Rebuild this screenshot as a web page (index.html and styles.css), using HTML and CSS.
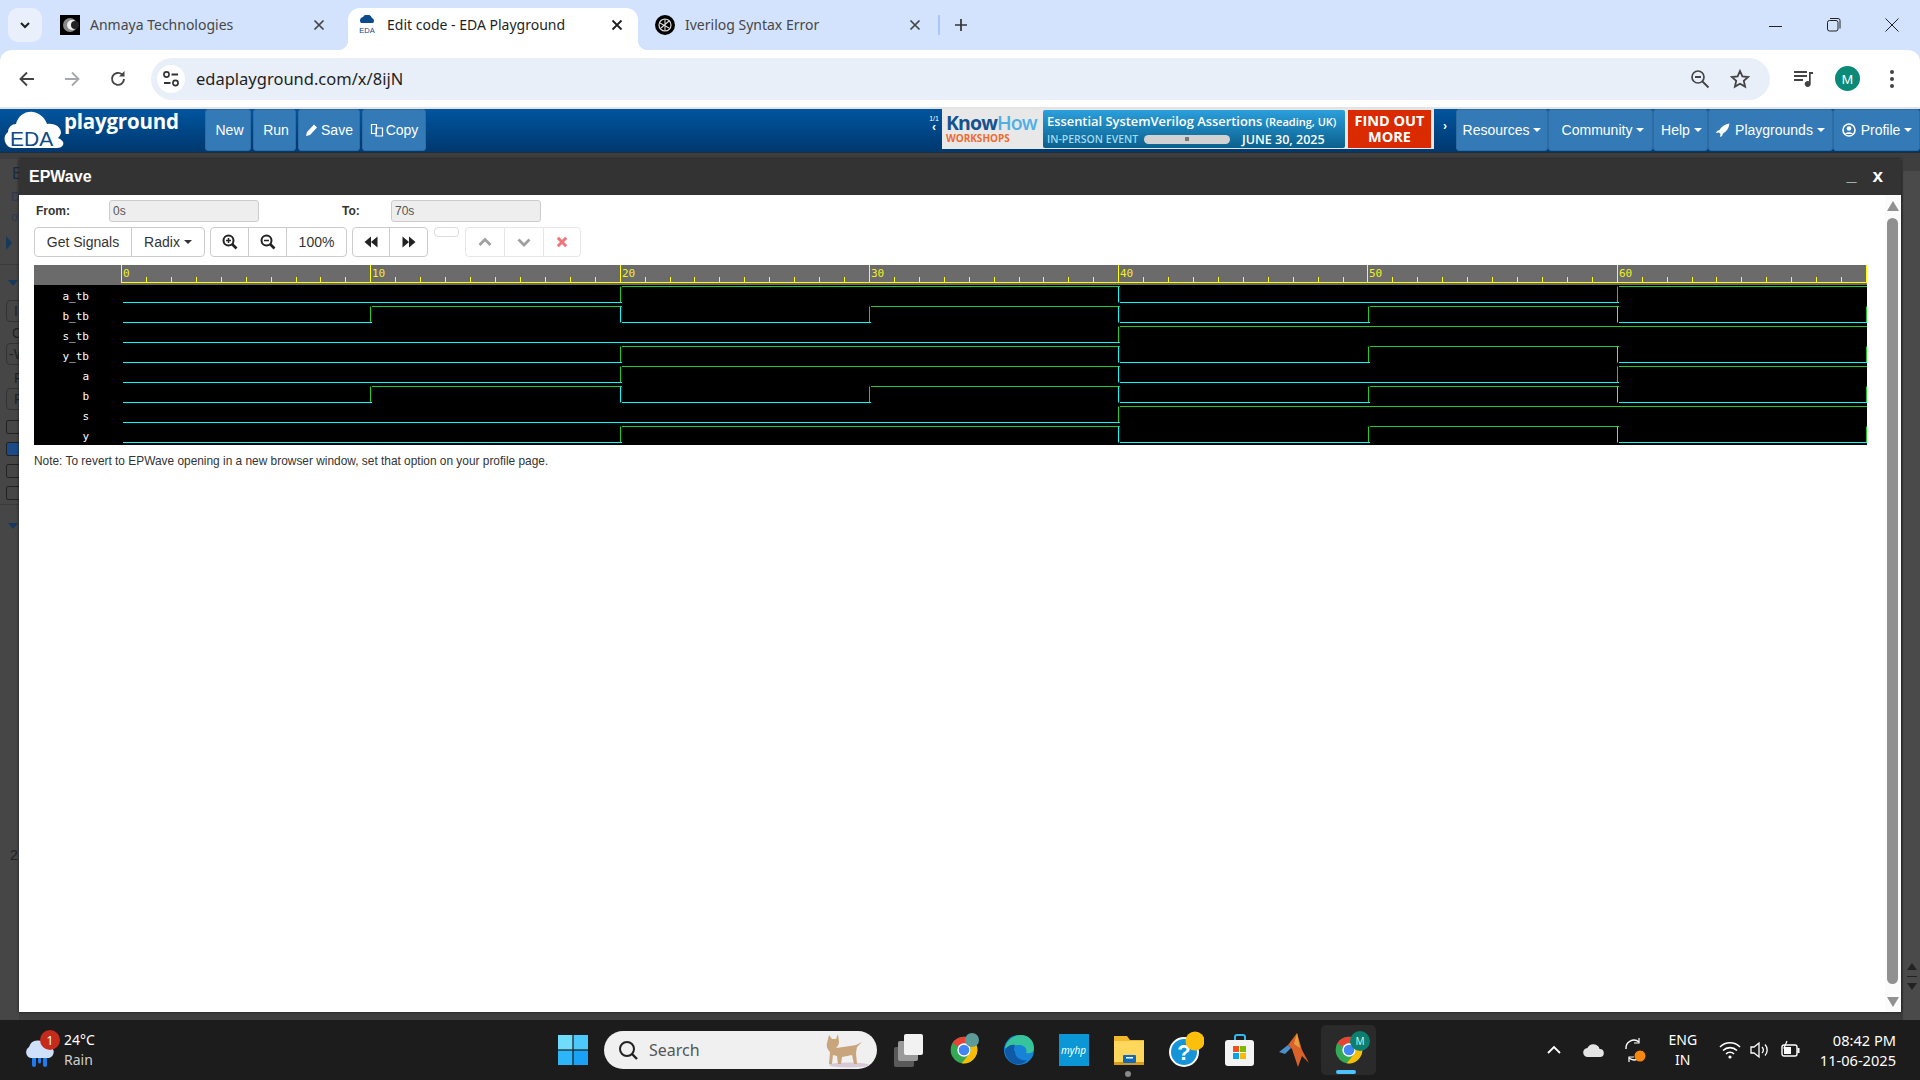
FILE: index.html
```html
<!DOCTYPE html>
<html lang="en">
<head>
<meta charset="utf-8">
<title>Edit code - EDA Playground</title>
<link rel="stylesheet" href="styles.css">
</head>
<body>
<svg class="defs" width="0" height="0">
  <defs>
    <symbol id="chrome" viewBox="0 0 24 24">
      <circle cx="12" cy="12" r="10" fill="#34a853"/>
      <path fill="#fbbc04" d="M20.66 7H12l4.33 2.5a5 5 0 0 1 0 5L10.3 21.85A10 10 0 0 0 20.66 7z"/>
      <path fill="#ea4335" d="M12 2a10 10 0 0 1 8.66 5H12a5 5 0 0 0-4.33 2.5L3.34 7A10 10 0 0 1 12 2z"/>
      <circle cx="12" cy="12" r="5" fill="#fff"/>
      <circle cx="12" cy="12" r="4" fill="#4285f4"/>
    </symbol>
    <g id="sigA">
      <path class="gr" d="M588 1.5H1086M1585 1.5H1833M586.5 1.5V17.5M1583.5 1.5V17.5"/>
      <path class="cy" d="M89 17.5H588M1086 17.5H1585M1084.5 1.5V17.5"/>
    </g>
    <g id="sigB">
      <path class="gr" d="M338 1.5H588M837 1.5H1086M1336 1.5H1585M336.5 1.5V17.5M835.5 1.5V17.5M1334.5 1.5V17.5M1832.5 1.5V17.5"/>
      <path class="cy" d="M89 17.5H338M588 17.5H837M1086 17.5H1336M1585 17.5H1833M586.5 1.5V17.5M1084.5 1.5V17.5M1583.5 1.5V17.5"/>
    </g>
    <g id="sigS">
      <path class="gr" d="M1086 1.5H1833M1084.5 1.5V17.5"/>
      <path class="cy" d="M89 17.5H1086"/>
    </g>
    <g id="sigY">
      <path class="gr" d="M588 1.5H1086M1336 1.5H1585M586.5 1.5V17.5M1334.5 1.5V17.5M1832.5 1.5V17.5"/>
      <path class="cy" d="M89 17.5H588M1086 17.5H1336M1585 17.5H1833M1084.5 1.5V17.5M1583.5 1.5V17.5"/>
    </g>
  </defs>
</svg>

<header class="chrome">
  <div class="tabstrip">
    <div class="tab-menu">
      <svg width="12" height="12" viewBox="0 0 12 12"><path d="M2 4l4 4 4-4" fill="none" stroke="#1f1f1f" stroke-width="2"/></svg>
    </div>
    <div class="tab">
      <svg class="fav" viewBox="0 0 20 20"><rect width="20" height="20" fill="#000"/><circle cx="10" cy="10" r="7" fill="#8a8a8a"/><circle cx="12" cy="10" r="5" fill="#eee"/><circle cx="15" cy="10" r="4" fill="#222"/></svg>
      <span class="tab-title">Anmaya Technologies</span>
      <svg class="tab-x" viewBox="0 0 12 12"><path d="M1.5 1.5l9 9M10.5 1.5l-9 9" stroke="#444" stroke-width="1.7"/></svg>
    </div>
    <div class="tab tab-active">
      <svg class="fav" viewBox="0 0 20 20"><path d="M3 10a4 4 0 0 1 3-4 5 5 0 0 1 9 1 3 3 0 0 1 1 5H4a3 3 0 0 1-1-2z" fill="#0b4a8b" transform="translate(0 -4)"/><text x="10" y="18" class="fav-eda">EDA</text></svg>
      <span class="tab-title">Edit code - EDA Playground</span>
      <svg class="tab-x" viewBox="0 0 12 12"><path d="M1.5 1.5l9 9M10.5 1.5l-9 9" stroke="#1f1f1f" stroke-width="1.8"/></svg>
    </div>
    <div class="tab tab-third">
      <svg class="fav" viewBox="0 0 20 20"><circle cx="10" cy="10" r="10" fill="#000"/><circle cx="10" cy="10" r="6" fill="none" stroke="#ddd" stroke-width="1.2"/><path d="M5 8l9 5M6 13l8-7M10 4v12" stroke="#ddd" stroke-width="1.1"/></svg>
      <span class="tab-title">Iverilog Syntax Error</span>
      <svg class="tab-x" viewBox="0 0 12 12"><path d="M1.5 1.5l9 9M10.5 1.5l-9 9" stroke="#444" stroke-width="1.7"/></svg>
    </div>
    <span class="tab-div"></span>
    <svg class="tab-plus" viewBox="0 0 14 14"><path d="M7 1v12M1 7h12" stroke="#333" stroke-width="1.7"/></svg>
    <div class="win-ctrl">
      <svg width="14" height="14" viewBox="0 0 14 14"><path d="M0 8.5h13" stroke="#222" stroke-width="1"/></svg>
      <svg width="14" height="14" viewBox="0 0 14 14"><rect x=".5" y="2.5" width="10.5" height="10.5" rx="2" fill="none" stroke="#222"/><path d="M3 .5h8a2 2 0 0 1 2 2v8" fill="none" stroke="#222"/></svg>
      <svg width="14" height="14" viewBox="0 0 14 14"><path d="M.5.5l13 13M13.5.5l-13 13" stroke="#222"/></svg>
    </div>
  </div>
  <div class="toolbar">
    <svg class="tool-ic" viewBox="0 0 20 20"><path d="M17 10H4M10 3.5L3.5 10l6.5 6.5" fill="none" stroke="#444" stroke-width="1.9"/></svg>
    <svg class="tool-ic" viewBox="0 0 20 20"><path d="M3 10h13M10 3.5l6.5 6.5-6.5 6.5" fill="none" stroke="#a6a8ab" stroke-width="1.9"/></svg>
    <svg class="tool-ic" viewBox="0 0 20 20"><path d="M16 10a6 6 0 1 1-2-4.6" fill="none" stroke="#444" stroke-width="1.9"/><path d="M16.5 2v5.5H11z" fill="#444"/></svg>
    <div class="omnibox">
      <div class="site-ic">
        <svg width="18" height="18" viewBox="0 0 18 18"><circle cx="4.5" cy="4.5" r="2.6" fill="none" stroke="#333" stroke-width="1.6"/><path d="M9.5 4.5H16M2 13h6.5" stroke="#333" stroke-width="1.8"/><circle cx="13.5" cy="13" r="2.6" fill="none" stroke="#333" stroke-width="1.6"/></svg>
      </div>
      <span class="url">edaplayground.com/x/8ijN</span>
      <svg class="omni-ic" viewBox="0 0 20 20"><circle cx="8" cy="8" r="6" fill="none" stroke="#444" stroke-width="1.7"/><path d="M5 8h6M12.5 12.5l6 6" stroke="#444" stroke-width="1.8"/></svg>
      <svg class="omni-ic" viewBox="0 0 20 20"><path d="M10 2l2.4 5.4 5.8.6-4.4 3.9 1.3 5.7L10 14.7l-5.1 2.9 1.3-5.7L1.8 8l5.8-.6z" fill="none" stroke="#444" stroke-width="1.8"/></svg>
    </div>
    <svg class="media-ic" viewBox="0 0 20 20"><path d="M0 3h13M0 7h13M0 11h9M0 14h0" stroke="#444" stroke-width="1.8"/><path d="M15 3h4v2h-2.3v10a3 3 0 1 1-1.7-2.7z" fill="#444"/></svg>
    <div class="avatar">M</div>
    <svg class="dots" viewBox="0 0 6 20"><circle cx="3" cy="3" r="2" fill="#444"/><circle cx="3" cy="10" r="2" fill="#444"/><circle cx="3" cy="17" r="2" fill="#444"/></svg>
  </div>
</header>

<nav class="eda-nav">
  <div class="logo">
    <svg class="cloud" width="62" height="40" viewBox="0 0 62 40"><path d="M9 38a9 9 0 0 1-5-16 8 8 0 0 1 8-8c2-8 9-13 17-12 7 1 12 6 14 12 8-1 14 3 14 9-1 3-2 4-3 5 5 2 6 5 5 7-1 2-3 3-6 3z" fill="#fff"/><text x="6" y="36" class="cloud-eda">EDA</text></svg>
    <span class="logo-text">playground</span>
  </div>
  <a class="nbtn nbtn-new">New</a>
  <a class="nbtn nbtn-run">Run</a>
  <a class="nbtn nbtn-save"><svg class="gly" viewBox="0 0 14 14"><path d="M1 13l1-4 7-7.5 3 3L5 12z" fill="#fff"/></svg>Save</a>
  <a class="nbtn nbtn-copy"><svg class="gly" viewBox="0 0 14 14"><path d="M1.5 1.5h5v9h-5zM6 5h6.5v8H6z" fill="none" stroke="#fff" stroke-width="1.2"/></svg>Copy</a>
  <div class="ad-wrap">
    <div class="ad-count"><span>1/1</span><span class="ad-arrow">‹</span></div>
    <div class="ad">
      <div class="ad-brand">
        <div class="kh"><span class="kh-k">Know</span><span class="kh-h">How</span></div>
        <div class="kh-w">WORKSHOPS</div>
      </div>
      <div class="ad-blue">
        <div class="ad-l1">Essential SystemVerilog Assertions <small>(Reading, UK)</small></div>
        <div class="ad-l2"><span class="ad-ev">IN-PERSON EVENT</span><span class="ad-pill"><i></i></span><span class="ad-date">JUNE 30, 2025</span></div>
      </div>
      <div class="ad-red">FIND OUT<br>MORE</div>
    </div>
    <span class="ad-next">›</span>
  </div>
  <a class="nbtn nm-res">Resources<i class="caret"></i></a>
  <a class="nbtn nm-com">Community<i class="caret"></i></a>
  <a class="nbtn nm-help">Help<i class="caret"></i></a>
  <a class="nbtn nm-play"><svg class="gly gly-l" viewBox="0 0 14 14"><path d="M13.5.5C9 1 5.500 3.500 3.500 7L1 8l-1 2 3-.5 1.500 1.500L4 14l2-1 1-2.500C10.500 8.500 13 5 13.500.5z" fill="#fff"/></svg>Playgrounds<i class="caret"></i></a>
  <a class="nbtn nm-prof"><svg class="gly gly-l" viewBox="0 0 14 14"><circle cx="7" cy="7" r="6" fill="none" stroke="#fff" stroke-width="1.600"/><circle cx="7" cy="5.500" r="2.300" fill="#fff"/><path d="M3 11c1-2.500 7-2.500 8 0z" fill="#fff"/></svg>Profile<i class="caret"></i></a>
</nav>

<main class="dim-page">
  <aside class="dim-left">
    <div class="dl-sec dl-sec1">
      <div class="dl-b">B</div>
      <div class="dl-sm">Do</div>
      <div class="dl-sm">ot</div>
      <div class="dl-tr-r"></div>
    </div>
    <div class="dl-sec dl-sec2">
      <div class="dl-tr-d"></div>
      <div class="dl-inp">I</div>
      <div class="dl-lab">C</div>
      <div class="dl-inp dl-inp2">-W</div>
      <div class="dl-lab dl-lab2">R</div>
      <div class="dl-inp dl-inp3">R</div>
      <div class="dl-chk"></div>
      <div class="dl-chk dl-on"></div>
      <div class="dl-chk"></div>
      <div class="dl-chk"></div>
    </div>
    <div class="dl-sec dl-sec3">
      <div class="dl-tr-d"></div>
      <div class="dl-two">2</div>
    </div>
  </aside>
  <aside class="dim-right">
    <div class="dr-up"></div>
    <div class="dr-line"></div>
    <div class="dr-down"></div>
  </aside>

  <section class="modal">
    <div class="modal-head">
      <span class="modal-title">EPWave</span>
      <span class="modal-min">_</span>
      <span class="modal-x">x</span>
    </div>
    <div class="modal-body">
      <div class="content">
        <div class="range">
          <label class="r-from">From:</label>
          <div class="r-input">0s</div>
          <label class="r-to">To:</label>
          <div class="r-input">70s</div>
        </div>
        <div class="tools">
          <div class="bg">
            <button class="b b-sig">Get Signals</button>
            <button class="b b-rad">Radix<i class="caret caret-d"></i></button>
          </div>
          <div class="bg">
            <button class="b b-ic"><svg width="16" height="16" viewBox="0 0 16 16"><circle cx="6.500" cy="6.500" r="5" fill="none" stroke="#222" stroke-width="2"/><path d="M4 6.500h5M6.500 4v5" stroke="#222" stroke-width="1.500"/><path d="M10 10l4.500 4.500" stroke="#222" stroke-width="2.600"/></svg></button>
            <button class="b b-ic"><svg width="16" height="16" viewBox="0 0 16 16"><circle cx="6.500" cy="6.500" r="5" fill="none" stroke="#222" stroke-width="2"/><path d="M4 6.500h5" stroke="#222" stroke-width="1.500"/><path d="M10 10l4.500 4.500" stroke="#222" stroke-width="2.600"/></svg></button>
            <button class="b b-pct">100%</button>
          </div>
          <div class="bg">
            <button class="b b-ic b-nav"><svg width="14" height="14" viewBox="0 0 14 14"><path d="M7 1.500v11L.5 7zM13.500 1.500v11L7 7z" fill="#222"/></svg></button>
            <button class="b b-ic b-nav"><svg width="14" height="14" viewBox="0 0 14 14"><path d="M.5 1.500v11L7 7zM7 1.500v11L13.500 7z" fill="#222"/></svg></button>
          </div>
          <div class="mini"></div>
          <div class="bg bg-dis">
            <button class="b b-ic b-dis"><svg width="14" height="14" viewBox="0 0 14 14"><path d="M1.500 10L7 4.500l5.500 5.500" fill="none" stroke="#a0a0a0" stroke-width="2.800"/></svg></button>
            <button class="b b-ic b-dis"><svg width="14" height="14" viewBox="0 0 14 14"><path d="M1.500 4.500L7 10l5.500-5.500" fill="none" stroke="#a0a0a0" stroke-width="2.800"/></svg></button>
            <button class="b b-ic b-dis b-x"><svg width="12" height="12" viewBox="0 0 12 12"><path d="M1.800 1.800l8.400 8.400M10.200 1.800l-8.400 8.400" stroke="#f0767a" stroke-width="3"/></svg></button>
          </div>
        </div>
        <svg class="wave" width="1833" height="180" viewBox="0 0 1833 180">
          <rect width="1833" height="180" fill="#000"/>
          <rect width="1833" height="20" fill="#6b6b6b"/>
          <path class="ye" d="M87 17.500H1833"/>
          <path class="ye" d="M87.500 0V18M336.500 0V18M586.500 0V18M835.500 0V18M1084.500 0V18M1333.500 0V18M1583.500 0V18M1832.500 0V18"/>
          <path class="ye" d="M112.500 12v6M137.500 12v6M162.500 12v6M187.500 12v6M212.500 12v6M237.500 12v6M262.500 12v6M286.500 12v6M311.500 12v6M361.500 12v6M386.500 12v6M411.500 12v6M436.500 12v6M461.500 12v6M486.500 12v6M511.500 12v6M536.500 12v6M561.500 12v6M611.500 12v6M636.500 12v6M660.500 12v6M685.500 12v6M710.500 12v6M735.500 12v6M760.500 12v6M785.500 12v6M810.500 12v6M860.500 12v6M885.500 12v6M910.500 12v6M935.500 12v6M960.500 12v6M985.500 12v6M1009.500 12v6M1034.500 12v6M1059.500 12v6M1109.500 12v6M1134.500 12v6M1159.500 12v6M1184.500 12v6M1209.500 12v6M1234.500 12v6M1259.500 12v6M1284.500 12v6M1309.500 12v6M1358.500 12v6M1383.500 12v6M1408.500 12v6M1433.500 12v6M1458.500 12v6M1483.500 12v6M1508.500 12v6M1533.500 12v6M1558.500 12v6M1608.500 12v6M1633.500 12v6M1658.500 12v6M1682.500 12v6M1707.500 12v6M1732.500 12v6M1757.500 12v6M1782.500 12v6M1807.500 12v6"/>
          <g class="ruler-t">
            <text x="89" y="12">0</text><text x="338" y="12">10</text><text x="588" y="12">20</text><text x="837" y="12">30</text><text x="1086" y="12">40</text><text x="1335" y="12">50</text><text x="1585" y="12">60</text>
          </g>
          <g class="sig-t">
            <text x="55" y="35">a_tb</text><text x="55" y="55">b_tb</text><text x="55" y="75">s_tb</text><text x="55" y="95">y_tb</text><text x="55" y="115">a</text><text x="55" y="135">b</text><text x="55" y="155">s</text><text x="55" y="175">y</text>
          </g>
          <use href="#sigA" y="20"/>
          <use href="#sigB" y="40"/>
          <use href="#sigS" y="60"/>
          <use href="#sigY" y="80"/>
          <use href="#sigA" y="100"/>
          <use href="#sigB" y="120"/>
          <use href="#sigS" y="140"/>
          <use href="#sigY" y="160"/>
        </svg>
        <p class="note">Note: To revert to EPWave opening in a new browser window, set that option on your profile page.</p>
      </div>
      <div class="vscroll">
        <div class="vs-up"></div>
        <div class="vs-thumb"></div>
        <div class="vs-down"></div>
      </div>
    </div>
  </section>
</main>

<footer class="taskbar">
  <div class="tb-left">
    <div class="weather">
      <svg width="32" height="36" viewBox="0 0 32 36"><path d="M8 24a6 6 0 0 1-2-11 9 9 0 0 1 17-1 6 6 0 0 1 3 12z" fill="#cfe0fb"/><path d="M9 24h4v7a2 2 0 0 1-4 0zM15 24h3v4a1.500 1.500 0 0 1-3 0zM20 24h4v7a2 2 0 0 1-4 0z" fill="#1e7cf0"/></svg>
      <span class="badge">1</span>
    </div>
    <div class="w-text"><span>24°C</span><span class="w-rain">Rain</span></div>
  </div>
  <svg class="start" viewBox="0 0 30 30"><rect width="14.400" height="14.400" fill="#6fdcfb"/><rect x="15.600" width="14.400" height="14.400" fill="#4cc9fa"/><rect y="15.600" width="14.400" height="14.400" fill="#2cb5f8"/><rect x="15.600" y="15.600" width="14.400" height="14.400" fill="#1aa2f5"/></svg>
  <div class="search">
    <svg width="22" height="22" viewBox="0 0 22 22"><circle cx="10" cy="10" r="7" fill="none" stroke="#222" stroke-width="2"/><path d="M15 15l5 5" stroke="#222" stroke-width="2.400"/></svg>
    <span class="s-text">Search</span>
    <svg class="s-cat" width="52" height="36" viewBox="0 0 52 36"><ellipse cx="30" cy="33" rx="20" ry="2.500" fill="#d8c9d6"/><path d="M10 3l3 4h4l2-5 1 8c0 3-2 5-3 6l14-2 6-1 6-3-5 5-1 6 1 11h-3l-2-9-10 2-1 7h-3l-1-8-4-1-1 9h-3l1-12c-2-2-4-5-3-9z" fill="#c9a57e"/></svg>
  </div>
  <div class="apps">
    <div class="app">
      <svg width="32" height="36" viewBox="0 0 32 36"><rect x="1" y="15" width="20" height="20" rx="2" fill="#5a5a5a"/><rect x="5" y="9" width="20" height="20" rx="2" fill="#9a9a9a"/><rect x="11" y="2" width="19" height="21" rx="2" fill="#f2f2f2"/></svg>
    </div>
    <div class="app app-rel">
      <svg width="32" height="32"><use href="#chrome"/></svg>
      <span class="chip chip-g"></span>
    </div>
    <div class="app">
      <svg width="32" height="32" viewBox="0 0 32 32"><circle cx="16" cy="16" r="15" fill="#1783d6"/><path d="M2 14C4 5 12 1 18 1c8 0 13 6 13 13 0 5-5 6-8 5 2-4-2-8-7-8-7 0-13 4-14 3z" fill="#35c49b"/><path d="M12 17c0 7 6 10 12 9-3 4-8 5-12 4C6 28 2 22 2 16c2-4 6-6 10-5-1 2-1 3-1 6z" fill="#0f5aa8"/></svg>
    </div>
    <div class="app">
      <div class="myhp">myhp</div>
    </div>
    <div class="app">
      <svg width="30" height="32" viewBox="0 0 30 32"><path d="M0 2h13l3 4h14v6H0z" fill="#f2b72a"/><rect y="7" width="30" height="24" fill="#ffd75c"/><rect y="28" width="30" height="3" fill="#d79b1c"/><rect x="9" y="21" width="13" height="8" rx="1" fill="#0f6cbd"/><rect x="12" y="23" width="7" height="1.500" fill="#fff"/></svg>
      <span class="run-dot"></span>
    </div>
    <div class="app app-help">
      <svg width="36" height="38" viewBox="0 0 36 38"><circle cx="16" cy="21" r="14" fill="#1694d8" stroke="#fff" stroke-width="2"/><text x="16" y="29" class="help-q">?</text><circle cx="27" cy="10" r="9.500" fill="#fdbf0b"/></svg>
    </div>
    <div class="app app-store">
      <svg width="30" height="32" viewBox="0 0 30 32"><path d="M10 7V3a2 2 0 0 1 2-2h6a2 2 0 0 1 2 2v4" fill="none" stroke="#33b6ea" stroke-width="2"/><rect y="6" width="29" height="26" rx="3" fill="#f4f4f4"/><rect x="8" y="12" width="6" height="6" fill="#f25022"/><rect x="15" y="12" width="6" height="6" fill="#7fba00"/><rect x="8" y="19" width="6" height="6" fill="#00a4ef"/><rect x="15" y="19" width="6" height="6" fill="#ffb900"/></svg>
    </div>
    <div class="app">
      <svg width="30" height="34" viewBox="0 0 30 34"><path d="M0 19l9-7 3 3-6 6z" fill="#4a90cf"/><path d="M9 12l9-12 5 17 7 13-7-7-4 11-6-18z" fill="#d8622a"/><path d="M15 11l3-11 3 15z" fill="#e8a03c"/></svg>
    </div>
    <div class="app app-active">
      <svg width="32" height="32"><use href="#chrome"/></svg>
      <span class="app-av">M</span>
      <span class="run-bar"></span>
    </div>
  </div>
  <div class="tray">
    <svg class="tr-up" width="14" height="10" viewBox="0 0 14 10"><path d="M1 8l6-6 6 6" fill="none" stroke="#fff" stroke-width="1.800"/></svg>
    <svg class="tr-cloud" width="22" height="16" viewBox="0 0 22 16"><path d="M5 15a4.500 4.500 0 0 1-.6-9 6.500 6.500 0 0 1 12.200 1A4 4 0 0 1 17 15z" fill="#e4e4e4"/></svg>
    <svg class="tr-sync" width="24" height="26" viewBox="0 0 24 26"><path d="M4 12a8 8 0 0 1 13-7M20 14a8 8 0 0 1-13 7" fill="none" stroke="#fff" stroke-width="1.400"/><path d="M17 1v5h-5M7 25v-5h5" fill="none" stroke="#fff" stroke-width="1.200"/><circle cx="18" cy="19" r="5.500" fill="#f7870e"/></svg>
    <div class="tr-lang"><span>ENG</span><span>IN</span></div>
    <svg class="tr-wifi" width="22" height="18" viewBox="0 0 22 18"><path d="M1 6a14 14 0 0 1 20 0M4 9.500a10 10 0 0 1 14 0M7 13a5.500 5.500 0 0 1 8 0" fill="none" stroke="#fff" stroke-width="1.600"/><circle cx="11" cy="16" r="1.600" fill="#fff"/></svg>
    <svg class="tr-vol" width="20" height="18" viewBox="0 0 20 18"><path d="M1 6h3l5-4v14l-5-4H1z" fill="none" stroke="#fff" stroke-width="1.300"/><path d="M12 6a4 4 0 0 1 0 6M15 3.500a8 8 0 0 1 0 11" fill="none" stroke="#fff" stroke-width="1.300"/></svg>
    <svg class="tr-bat" width="20" height="20" viewBox="0 0 20 20"><rect x="1" y="5" width="15" height="11" rx="2" fill="none" stroke="#fff" stroke-width="1.400"/><rect x="3" y="7" width="7" height="7" fill="#fff"/><rect x="16.500" y="8" width="2" height="5" fill="#fff"/><path d="M6 1L3 8h3l-1 5" fill="none" stroke="#fff" stroke-width="1.200"/></svg>
    <div class="clock"><span>08:42 PM</span><span>11-06-2025</span></div>
  </div>
</footer>
</body>
</html>
```

FILE: styles.css
```css
* { box-sizing: border-box; }
html, body { margin: 0; height: 100%; }
body {
  width: 1920px; height: 1080px; overflow: hidden;
  display: flex; flex-direction: column;
  font-family: "Liberation Sans", Arial, sans-serif;
  background: #444;
}
.defs { position: absolute; }

/* browser chrome */
.chrome { background: #d3e3fd; flex: none; font-family: "Noto Sans", "Open Sans", sans-serif; }
.tabstrip { height: 50px; display: flex; align-items: flex-end; padding-left: 8px; }
.tab-menu {
  width: 34px; height: 34px; margin-bottom: 8px; border-radius: 10px;
  background: #e9effb; display: flex; align-items: center; justify-content: center;
}
.tab {
  width: 290px; height: 42px; margin-right: 8px; padding: 0 11px 9px 10px;
  display: flex; align-items: center; gap: 10px;
  font-size: 14px; color: #474747; position: relative;
}
.tab:nth-child(2) { margin-left: 8px; margin-right: 8px; }
.tab-third { padding-left: 9px; }
.fav { width: 20px; height: 20px; flex: none; }
.fav-eda { font: 7.5px "Liberation Sans", sans-serif; text-anchor: middle; fill: #0b4a8b; }
.tab-title { flex: 1; white-space: nowrap; }
.tab-x { width: 12px; height: 12px; flex: none; margin-right: 4px; }
.tab-active { background: #fff; border-radius: 12px 12px 0 0; color: #1f1f1f; padding-left: 9px; }
.tab-active::before, .tab-active::after {
  content: ""; position: absolute; bottom: 0; width: 10px; height: 10px;
}
.tab-active::before { left: -10px; background: radial-gradient(circle at 0 0, transparent 10px, #fff 10.5px); }
.tab-active::after { right: -10px; background: radial-gradient(circle at 100% 0, transparent 10px, #fff 10.5px); }
.tab-div { width: 2px; height: 20px; background: #a8c7fa; margin: 0 0 15px -6px; }
.tab-plus { width: 14px; height: 14px; margin: 0 0 18px 14px; }
.win-ctrl { margin-left: auto; margin-right: 21px; display: flex; gap: 44px; align-self: flex-start; margin-top: 18px; }

.toolbar {
  height: 59px; background: #fff; border-radius: 12px 12px 0 0;
  border-bottom: 2px solid #e4e4e4;
  display: flex; align-items: center; padding-left: 17px;
}
.tool-ic { width: 20px; height: 20px; margin-right: 25px; flex: none; }
.toolbar .tool-ic:nth-child(2) { margin-right: 26px; }
.toolbar .tool-ic:nth-child(3) { margin-right: 23px; }
.omnibox {
  width: 1619px; height: 42px; border-radius: 21px; background: #e9eff9;
  display: flex; align-items: center; padding: 0 20px 0 6px; flex: none;
}
.site-ic { width: 28px; height: 28px; border-radius: 50%; background: #fff; display: flex; align-items: center; justify-content: center; flex: none; }
.url { font-size: 16.500px; color: #1f1f1f; margin-left: 11px; flex: 1; }
.omni-ic { width: 20px; height: 20px; margin-left: 20px; flex: none; }
.media-ic { width: 20px; height: 20px; margin-left: 24px; flex: none; }
.avatar {
  width: 25px; height: 25px; border-radius: 50%; background: #0b8a78; color: #fff;
  font-size: 13px; display: flex; align-items: center; justify-content: center;
  margin-left: 21px; flex: none;
}
.dots { width: 6px; height: 20px; margin-left: 29px; flex: none; }

/* EDA navbar */
.eda-nav {
  height: 44px; flex: none; display: flex; align-items: flex-start;
  background: linear-gradient(#00559f, #00386f);
  border-bottom: 1px solid #1f2d3d;
  color: #fff; font-size: 14px;
}
.logo { width: 205px; height: 42px; position: relative; display: flex; flex: none; padding-left: 4px; }
.cloud { margin-top: 1px; flex: none; }
.cloud-eda { font: 21px "Liberation Sans", sans-serif; fill: #0b4a8b; }
.logo-text { font: bold 20.500px "Open Sans", sans-serif; color: #fff; margin: -2px 0 0 -2px; letter-spacing: -.2px; }
.nbtn {
  height: 42px; background: #337ab7; border-radius: 3px;
  display: flex; align-items: center; justify-content: center; flex: none;
  margin-right: 2px; white-space: nowrap; color: #fff;
  border: 1px solid #2e6da4;
}
.nbtn-new { width: 46px; padding-left: 3px; }
.nbtn-run { width: 43px; padding-left: 3px; }
.nbtn-save { width: 62px; }
.nbtn-copy { width: 64px; }
.gly { width: 14px; height: 14px; margin-right: 2px; flex: none; }
.gly-l { margin-right: 5px; }
.ad-wrap { margin-left: auto; display: flex; align-items: flex-start; flex: none; }
.ad-count { width: 16px; font-size: 7px; display: flex; flex-direction: column; align-items: center; padding-top: 6px; line-height: 8px; }
.ad-arrow { font-size: 12px; font-weight: bold; }
.ad {
  width: 492px; height: 40px; background: #e8e8e8; display: flex; padding: 1px 3px 1px 0;
  font-family: "Open Sans", "Noto Sans", sans-serif;
}
.ad-brand { width: 101px; padding: 3px 0 0 4px; }
.kh { font-size: 19.500px; font-weight: bold; line-height: 20px; letter-spacing: -.9px; white-space: nowrap; }
.kh-k { color: #16528f; }
.kh-h { color: #4fb0e4; font-weight: 600; }
.kh-w { color: #ef6b2f; font-size: 10px; font-weight: 700; line-height: 11px; }
.ad-blue {
  width: 302px; height: 38px; border-radius: 2px;
  background: linear-gradient(#2b9fdc, #0b5f8c); padding: 2px 4px;
  color: #fff;
}
.ad-l1 { font-size: 12.900px; font-weight: 600; line-height: 18px; white-space: nowrap; }
.ad-l1 small { font-size: 11px; }
.ad-l2 { display: flex; align-items: center; height: 16px; }
.ad-ev { color: #9fdcf5; font-size: 10.500px; font-weight: 600; width: 97px; white-space: nowrap; }
.ad-pill { width: 86px; height: 9px; border-radius: 5px; background: #d2d2d2; display: flex; align-items: center; justify-content: center; }
.ad-pill i { width: 4px; height: 4px; background: #777; }
.ad-date { margin-left: 12px; font-size: 12.500px; font-weight: 600; white-space: nowrap; }
.ad-red {
  width: 83px; height: 38px; margin-left: 3px; background: #d92a00; color: #fff;
  font-size: 14.500px; font-weight: 700; line-height: 16px; text-align: center; padding-top: 3px;
}
.ad-next { width: 22px; text-align: center; font-size: 12px; font-weight: bold; padding-top: 10px; }
.nm-res { width: 92px; margin: 0; }
.nm-com { width: 105px; margin: 0; padding-left: 5px; }
.nm-help { width: 55px; margin: 0; padding-left: 2px; }
.nm-play { width: 125px; margin: 0; }
.nm-prof { width: 87px; margin: 0; padding-left: 1px; }
.caret {
  display: inline-block; width: 0; height: 0; margin-left: 4px;
  border-top: 4px solid #fff; border-left: 4px solid transparent; border-right: 4px solid transparent;
}
.caret-d { border-top-color: #333; }

/* dimmed page behind the dialog */
.dim-page { flex: 1; position: relative; display: flex; justify-content: space-between; background: #3e3e3e; min-height: 0; }
.dim-left { width: 19px; overflow: hidden; background: #464646; margin-top: 6px; color: #222; }
.dl-sec { border-bottom: 1px solid #3a3a3a; position: relative; width: 60px; padding-left: 6px; }
.dl-sec1 { height: 106px; padding-top: 5px; }
.dl-b { font-size: 16px; line-height: 20px; margin-left: 6px; color: #1a2a44; }
.dl-sm { font-size: 12px; line-height: 26px; color: #2a3a50; margin-left: 5px; }
.dl-sm + .dl-sm { line-height: 14px; margin-top: 0; }
.dl-tr-r { width: 0; height: 0; margin-top: 12px; border-left: 6px solid #16395e; border-top: 7px solid transparent; border-bottom: 7px solid transparent; }
.dl-sec2 { height: 240px; padding-top: 15px; }
.dl-tr-d { width: 0; height: 0; margin-left: 2px; border-top: 6px solid #16395e; border-left: 5px solid transparent; border-right: 5px solid transparent; }
.dl-inp { width: 60px; height: 22px; border: 1px solid #333; border-radius: 4px; margin-top: 14px; font-size: 14px; line-height: 20px; padding-left: 7px; }
.dl-inp2 { margin-top: 2px; padding-left: 2px; }
.dl-inp3 { margin-top: 1px; }
.dl-lab { font-size: 14px; line-height: 16px; margin: 3px 0 0 6px; }
.dl-lab2 { margin: 4px 0 0 8px; line-height: 18px; }
.dl-chk { width: 14px; height: 14px; border: 1px solid #222; border-radius: 2px; margin-top: 8px; }
.dl-inp3 + .dl-chk { margin-top: 10px; }
.dl-on { background: #1b4a87; }
.dl-sec3 { height: 400px; padding-top: 18px; border: 0; }
.dl-two { font-size: 14px; margin: 318px 0 0 4px; color: #222; }
.dim-right { width: 20px; background: #4a4a4a; border-left: 3px solid #3a3a3a; margin-top: 18px; display: flex; flex-direction: column; align-items: center; justify-content: flex-end; padding-bottom: 30px; }
.dr-up { width: 0; height: 0; border-bottom: 7px solid #222; border-left: 5px solid transparent; border-right: 5px solid transparent; }
.dr-line { width: 10px; height: 1px; background: #222; margin: 6px 0; }
.dr-down { width: 0; height: 0; border-top: 7px solid #222; border-left: 5px solid transparent; border-right: 5px solid transparent; }

/* EPWave dialog */
.modal {
  position: absolute; left: 19px; top: 6px; width: 1882px; height: 853px;
  display: flex; flex-direction: column; box-shadow: 0 0 3px rgba(0,0,0,.6);
}
.modal-head {
  height: 36px; flex: none; background: #333; color: #fff; border-radius: 3px 3px 0 0;
  display: flex; align-items: center; padding-left: 10px;
}
.modal-title { font-size: 16px; font-weight: bold; flex: 1; }
.modal-min { font-weight: bold; font-size: 18px; margin: -4px 16px 0 0; }
.modal-x { font-weight: bold; font-size: 19px; margin-right: 18px; line-height: 1; margin-top: -3px; }
.modal-body { flex: 1; background: #fff; display: flex; min-height: 0; }
.content { flex: 1; padding: 5px 0 0 15px; min-width: 0; }
.range { display: flex; align-items: center; height: 22px; font-size: 12px; color: #333; }
.r-from { width: 75px; font-weight: bold; padding-left: 2px; }
.r-to { margin-left: 83px; width: 49px; font-weight: bold; }
.r-input {
  width: 150px; height: 22px; background: #eee; border: 1px solid #ccc; border-radius: 3px;
  font-size: 12px; color: #555; line-height: 20px; padding-left: 3px;
}
.tools { display: flex; align-items: flex-start; height: 30px; margin-top: 5px; gap: 5px; }
.bg { display: flex; height: 30px; border: 1px solid #ccc; border-radius: 4px; background: #fff; }
.bg-dis { border-color: #e6e6e6; margin-left: 1px; }
.b {
  height: 28px; border: 0; background: transparent; border-right: 1px solid #ccc; padding: 0;
  font: 14px "Liberation Sans", Arial, sans-serif; color: #333;
  display: flex; align-items: center; justify-content: center;
}
.b:last-child { border-right: 0; }
.b-sig { width: 97px; }
.b-rad { width: 72px; }
.b-ic { width: 38px; }
.b-nav { width: 37px; }
.b-pct { width: 59px; }
.b-dis { border-color: #e6e6e6; width: 39px; }
.b-x { width: 36px; }
.mini { width: 25px; height: 10px; border: 1px solid #ddd; border-radius: 4px; margin-left: 1px; }
.wave { display: block; margin-top: 8px; }
.wave path { fill: none; shape-rendering: crispEdges; stroke-width: 1; }
.ye { stroke: #ffff00; }
.gr { stroke: #22cc22; }
.cy { stroke: #00ffff; }
.ruler-t text { font: 11px "DejaVu Sans Mono", monospace; fill: #f0f020; }
.sig-t text { font: 11px "DejaVu Sans Mono", monospace; fill: #fff; text-anchor: end; }
.note { margin: 9px 0 0; font-size: 11.900px; line-height: 14px; color: #333; }
.vscroll { width: 15px; flex: none; margin-right: 1px; background: #fbfbfb; display: flex; flex-direction: column; align-items: center; padding: 6px 0 5px; }
.vs-up { width: 0; height: 0; border-bottom: 10px solid #909090; border-left: 6px solid transparent; border-right: 6px solid transparent; }
.vs-thumb { width: 11px; height: 766px; margin: 7px 0 13px; background: #909090; border-radius: 6px; }
.vs-down { width: 0; height: 0; border-top: 10px solid #909090; border-left: 6px solid transparent; border-right: 6px solid transparent; }

/* windows taskbar */
.taskbar {
  height: 60px; flex: none; background: #1c1c1c; color: #fff; display: flex; align-items: center;
  font-family: "Noto Sans", "Open Sans", sans-serif; font-size: 14px;
}
.tb-left { width: 558px; flex: none; display: flex; align-items: center; padding-left: 23px; }
.weather { width: 41px; height: 40px; position: relative; padding-top: 4px; }
.badge {
  position: absolute; left: 17px; top: 0; width: 20px; height: 20px; border-radius: 50%;
  background: #c42b1c; font-size: 12px; display: flex; align-items: center; justify-content: center;
}
.w-text { display: flex; flex-direction: column; line-height: 20px; }
.w-rain { color: #cfcfcf; }
.start { width: 30px; height: 30px; flex: none; }
.search {
  width: 273px; height: 38px; margin-left: 16px; border-radius: 19px; background: #f0f0f0;
  display: flex; align-items: center; padding-left: 13px; color: #555; font-size: 16px; flex: none;
}
.s-text { margin-left: 10px; flex: 1; }
.s-cat { margin-right: 6px; }
.apps { display: flex; margin-left: 4px; height: 60px; align-items: center; }
.app { width: 55px; height: 50px; display: flex; align-items: center; justify-content: center; position: relative; flex: none; }
.app-rel { position: relative; }
.app-help svg { margin-left: 4px; }
.app-store svg { margin-left: 2px; }
.chip { position: absolute; right: 12px; top: 8px; width: 14px; height: 14px; border-radius: 50%; }
.chip-g { background: #5d9b9b; }
.myhp {
  width: 30px; height: 32px; background: #0b96d6; color: #fff; font-size: 10px; font-style: italic;
  display: flex; align-items: center; justify-content: center;
}
.run-dot { position: absolute; left: 24px; bottom: -2px; width: 6px; height: 6px; border-radius: 50%; background: #8a8a8a; }
.help-q { font: bold 22px "Liberation Sans", sans-serif; fill: #fff; text-anchor: middle; }
.app-active { background: #2a2a2a; border-radius: 5px; }
.app-av {
  position: absolute; right: 6px; top: 6px; width: 20px; height: 20px; border-radius: 50%;
  background: #0b7f70; color: #cdeee6; font-size: 10px; display: flex; align-items: center; justify-content: center;
}
.run-bar { position: absolute; left: 15px; bottom: 1px; width: 20px; height: 4px; border-radius: 2px; background: #4cc2ff; }
.tray { margin-left: auto; display: flex; align-items: center; padding-right: 24px; }
.tr-up { margin-right: 22px; }
.tr-cloud { margin-right: 17px; }
.tr-sync { margin-right: 17px; }
.tr-lang { display: flex; flex-direction: column; align-items: center; line-height: 20px; width: 40px; margin-right: 16px; }
.tr-wifi { margin-right: 9px; }
.tr-vol { margin-right: 11px; }
.tr-bat { margin-right: 19px; }
.clock { display: flex; flex-direction: column; align-items: flex-end; line-height: 20px; font-size: 14.600px; }
```
